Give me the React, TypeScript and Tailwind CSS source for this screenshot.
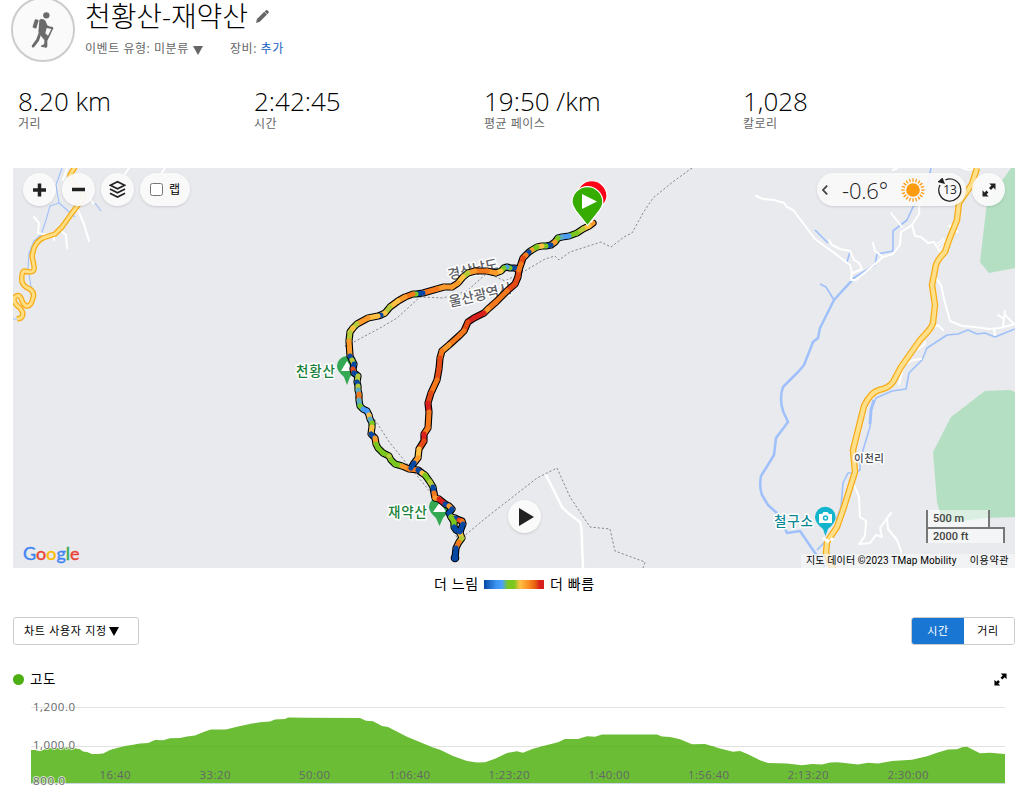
import React from 'react';

type Point = [number, number];
type TrackPoint = [number, number, string];

const NAVY = '#0549a4';
const BLUE = '#4a9df8';
const TEAL = '#5cabc8';
const GREEN = '#7ac71f';
const LIME = '#b5cb3a';
const YELLOW = '#ffc043';
const AMBER = '#fb9a2c';
const ORANGE = '#f4791d';
const RED = '#e44a15';
const CRIMSON = '#d8201f';

// each colour belongs to the piece that ends at the point
const commonTrack: TrackPoint[] = [
  [593, 223, AMBER], [589, 226, AMBER], [583, 229, YELLOW], [577, 233, LIME], [569, 236, GREEN], [562, 237, BLUE], [558, 238, TEAL],
  [555, 242, GREEN], [551, 245, AMBER], [546, 246, NAVY], [542, 246, GREEN], [537, 247, YELLOW], [532, 250, GREEN], [529, 252, AMBER],
  [526, 255, NAVY], [523, 258, ORANGE], [521, 264, RED], [519, 270, ORANGE],
];

const eastTrack: TrackPoint[] = [
  [519, 270, ORANGE], [518, 277, RED], [515, 284, RED], [507, 291, RED], [496, 302, ORANGE], [488, 309, ORANGE], [484, 313, AMBER],
  [474, 318, CRIMSON], [468, 322, CRIMSON], [464, 331, RED], [460, 335, ORANGE], [449, 345, ORANGE], [442, 351, AMBER],
  [440, 358, ORANGE], [439, 369, RED], [437, 380, RED], [431, 393, ORANGE], [428, 403, RED], [429, 412, CRIMSON],
  [428, 428, ORANGE], [424, 434, ORANGE], [424, 441, CRIMSON], [419, 449, RED], [418, 458, YELLOW], [414, 463, AMBER], [411, 468, NAVY],
];

const westTrack: TrackPoint[] = [
  [519, 270, ORANGE], [515, 268, RED], [510, 268, NAVY], [507, 267, GREEN], [504, 268, BLUE], [501, 271, GREEN], [496, 273, YELLOW],
  [487, 271, AMBER], [475, 271, ORANGE], [468, 273, AMBER], [463, 277, LIME], [458, 283, YELLOW], [452, 287, AMBER], [444, 287, AMBER],
  [437, 289, AMBER], [423, 293, ORANGE], [416, 294, NAVY], [413, 294, GREEN], [405, 297, ORANGE], [398, 301, AMBER], [390, 307, YELLOW],
  [385, 313, LIME], [381, 315, YELLOW], [378, 316, NAVY], [368, 318, YELLOW], [357, 324, AMBER], [353, 328, LIME], [350, 332, YELLOW],
  [349, 341, LIME], [350, 356, AMBER], [352, 360, NAVY], [354, 364, LIME], [353, 369, NAVY], [354, 373, RED], [358, 376, NAVY],
  [357, 382, LIME], [358, 386, NAVY], [358, 390, LIME], [359, 394, TEAL], [359, 400, ORANGE], [360, 406, TEAL], [363, 409, GREEN],
  [367, 411, BLUE], [369, 415, BLUE], [370, 419, YELLOW], [372, 423, TEAL], [372, 427, GREEN], [371, 434, YELLOW], [375, 438, NAVY],
  [376, 444, AMBER], [378, 448, GREEN], [383, 453, GREEN], [389, 456, GREEN], [391, 460, LIME], [395, 464, GREEN], [402, 466, GREEN],
  [409, 469, AMBER], [418, 470, ORANGE], [422, 473, NAVY], [425, 475, YELLOW], [430, 482, GREEN], [433, 487, LIME], [434, 493, NAVY],
  [435, 498, ORANGE], [439, 499, AMBER], [445, 504, CRIMSON], [449, 506, NAVY], [452, 509, AMBER], [449, 513, NAVY], [451, 517, NAVY],
  [455, 518, YELLOW], [459, 520, NAVY], [462, 521, RED], [463, 524, ORANGE], [461, 529, NAVY], [460, 533, NAVY], [462, 538, YELLOW],
  [459, 542, LIME], [456, 548, ORANGE], [455, 558, NAVY],
];

const summitLoop: TrackPoint[] = [
  [451, 517, NAVY], [454, 522, GREEN], [454, 527, GREEN], [456, 530, NAVY], [460, 532, NAVY],
];

const elevation: Point[] = [
  [31, 750], [35, 750], [39, 751], [43, 750], [47, 748], [58, 748], [68, 747], [76, 748.5], [80, 749.3], [83, 751.5], [87, 752], [92, 754], [98, 754],
  [103, 753.5], [110, 750], [117, 748], [125, 746], [133, 744.7], [140, 743.5], [148, 743], [155, 740], [163, 740.3], [170, 738.3],
  [180, 738], [187, 736.5], [195, 735.5], [201, 733], [207, 730.7], [211, 729.6], [226, 729.6], [237, 726.7], [252, 723.5], [260, 722.3], [270, 721.5],
  [275, 719.5], [285, 719], [288, 717.5], [310, 717.7], [360, 718], [366, 720.7], [373, 721.2], [382, 726], [388, 727], [407, 736.7],
  [433, 747.5], [440, 749.7], [453, 756], [467, 761], [477, 762.5], [485, 762.2], [495, 758.7], [507, 753], [517, 751.3], [523, 752.7],
  [533, 748.7], [547, 745], [558, 742.3], [565, 739], [578, 739], [587, 736.3], [595, 736.7], [602, 734.5], [657, 734.6], [662, 736.6],
  [670, 737], [680, 739.3], [692, 744.3], [705, 744], [720, 748.6], [733, 751.7], [740, 751], [748, 754.3], [760, 760.3], [768, 763],
  [787, 763.6], [802, 765.3], [812, 764], [822, 764.6], [830, 762.6], [838, 762.3], [858, 764.6], [868, 762.8], [878, 763.6], [892, 761],
  [912, 759.7], [927, 756.3], [937, 752.7], [948, 749.5], [957, 749.3], [962, 747.3], [967, 746.7], [980, 753.3], [990, 752.7], [1005, 754],
];

const stats = [
  { value: '8.20 km', label: '거리', width: 'w-[236px]' },
  { value: '2:42:45', label: '시간', width: 'w-[230px]' },
  { value: '19:50 /km', label: '평균 페이스', width: 'w-[259px]' },
  { value: '1,028', label: '칼로리', width: 'w-[200px]' },
];

const timeLabels = [
  { x: 115, text: '16:40' },
  { x: 215, text: '33:20' },
  { x: 314.5, text: '50:00' },
  { x: 409.5, text: '1:06:40' },
  { x: 509, text: '1:23:20' },
  { x: 609, text: '1:40:00' },
  { x: 708.5, text: '1:56:40' },
  { x: 808, text: '2:13:20' },
  { x: 908, text: '2:30:00' },
];

const toPoints = (pts: (Point | TrackPoint)[]) => pts.map((p) => `${p[0]},${p[1]}`).join(' ');

function Track({ points }: { points: TrackPoint[] }) {
  return (
    <g fill="none" strokeLinecap="round" strokeLinejoin="round" strokeWidth={5}>
      {points.slice(1).map((p, i) => (
        <line key={i} x1={points[i][0]} y1={points[i][1]} x2={p[0]} y2={p[1]} stroke={p[2]} />
      ))}
    </g>
  );
}

function HikerIcon() {
  return (
    <svg className="h-[37px] w-[24px]" viewBox="95 29 72 111" fill="#6b6b6b">
      <circle cx="141" cy="42" r="9.5" />
      <rect x="-6" y="-13" width="12" height="27" rx="3" transform="translate(109 67) rotate(17)" />
      <path d="M120 56q3-4 9-3 8 1 10 7l5 12 9 4q6-1 9 4 1 3-3 6l-5 12-10 20 0 17q0 4-4 4-4 1-5-3l0-20-12-14q-8-8-5-19z" />
      <path d="M118 94l6 9-5 15-15 20q-4 2-6-1-2-2 0-5l13-18z" />
      <path d="M126 137q-3-4 2-5l7-4 3-8 4 14q1 4-4 4z" />
      <path d="M142 80l-4 16 8 7 10-20z" fill="#fafafa" />
    </svg>
  );
}

function ExpandIcon({ className }: { className: string }) {
  return (
    <svg className={className} viewBox="0 0 14 14" fill="currentColor">
      <path d="M7.3 0.5H13.5V6.7L11.4 4.6L9 7L7 5L9.4 2.6ZM6.7 13.5H0.5V7.3L2.6 9.4L4.4 7.6L6.4 9.6L4.6 11.4Z" />
    </svg>
  );
}

function SunIcon() {
  return (
    <svg className="h-6 w-6" viewBox="-12 -12 24 24">
      <circle r="6.8" fill="#ff9b0f" />
      {Array.from({ length: 20 }, (_, i) => (
        <line key={i} x1="0" y1="-8.300" x2="0" y2="-11.700" stroke="#ff9b0f" strokeWidth="1.300" transform={`rotate(${i * 18})`} />
      ))}
    </svg>
  );
}

function RouteMap() {
  const rightRoad = 'M977 168L972 184L959 203L957 220L949 240L945 252Q935 262 935 270L932 285L935 305L933 323Q932 328 920 340L901 367L893 382Q889 388 879 390Q871 392 864 406L858 430L853 450L855 472L843 510L837 527L827 542L826 553L833 569';
  const leftRoad = 'M75 167L70 175Q70 181 76 186Q86 192 82 200L72 213L62 227L55 234L43 238Q37 241 34 248L32 256L34 266Q35 272 30 272L24 271Q21 273 22 282Q24 287 30 289Q35 293 33 298Q31 307 26 306Q22 303 21 298Q18 293 14 298Q13 303 20 308Q25 314 21 318L17 319';
  return (
    <svg className="block h-[400px] w-[1002px]" viewBox="13 168 1002 400">
      <rect x="13" y="168" width="1002" height="400" fill="#e8eaed" />
      <g fill="#b4dfc2">
        <path d="M1011 168L987 202L980 262L989 273L1015 268V168Z" />
        <path d="M1015 392L1010 390L985 391L951 417L933 452L937 502L943 523L987 518L1015 517Z" />
      </g>

      {/* rivers */}
      <g fill="none" stroke="#9fc0fa" strokeWidth="1.600" strokeLinejoin="round">
        <path d="M931 168L926 190L913 207L907 220L893 231L893 251L877 254L875 265L855 277" />
        <path d="M855 277L834 300L820 328L818 338L813 342L804 365L799 371L783 387Q779 398 783 411L788 422L776 438L774 455L761 476Q759 487 762 495L768 505L778 514L787 533L800 531L813 550L825 567" strokeWidth="2.500" />
        <path d="M820 284L826 287L834 300M815 230L828 243M850 252L847 262M825 542L817 550" />
        <path d="M1015 329L995 337L985 333L977 334L968 330L958 334L947 335L927 348L922 360L909 373L906 389L892 391L876 398L871 410L870 427L860 460L860 470L855 473L848 473L843 483L841 507L836 520" />
        <path d="M62 168L56 185L59 203L50 206L46 220L41 235M59 203L75 217M95 203L101 211M41 235L34 241L29 253L28 268L31 287M13 319H20" strokeWidth="1.100" />
      </g>
      <path d="M874 400L871 410L870 424" stroke="#9fc0fa" strokeWidth="3" fill="none" />

      {/* minor roads */}
      <g fill="none" stroke="#fff" strokeWidth="2" strokeLinejoin="round" strokeLinecap="round">
        <path d="M756 196L763 199L774 200L784 203L787 207L793 210L803 223L815 239L833 252L850 265L852 273L851 280L856 280L868 270L883 257L893 254L900 245L901 232L912 225L919 214L920 195L913 182" />
        <path d="M912 225L915 236L921 237L928 243L934 242L940 252" />
        <path d="M829 240L832 245L840 249L850 251L854 260L859 263L862 269L853 273M873 243L875 251L883 257" />
        <path d="M936 278L941 285L944 299L950 321L962 326L975 327L989 329L1000 328L1015 324M1005 311L1003 326M998 315L1004 319M1005 315L1014 324M994 329L995 335" />
        <path d="M933 328L938 325L943 330M918 349L924 345L925 342M904 365L913 360L921 359M903 368L899 384M891 213L902 227M949 226L958 232M957 221L950 226" />
        <path d="M853 482L859 497L860 517L866 521L865 536L859 544L870 543L876 535L882 537L880 528L891 513L887 518L888 529L897 540L901 551V559" />
        <path d="M546 475L562 507Q567 513 580 522Q582 526 582 543L583 568" strokeWidth="2.500" />
        <path d="M34 217L39 223L38 233L47 235L54 235V240M62 224L59 229L66 235L67 248M78 210L84 224L89 241M63 180L67 168M125 174L129 168M161 174L165 168M88 196L93 203" />
        <path d="M893 170L897 168M962 168L969 170L975 168" />
        <path d="M937 244L944 238M938 247L945 240M940 250L946 243" strokeWidth="1.100" />
      </g>

      <g fill="none" strokeLinejoin="round">
        <path d={rightRoad} stroke="#f7ab16" strokeWidth="6.500" />
        <path d={rightRoad} stroke="#ffe08a" strokeWidth="4" />
        <path d={leftRoad} stroke="#f7ab16" strokeWidth="5.500" />
        <path d={leftRoad} stroke="#ffdf86" strokeWidth="3" />
      </g>

      {/* borders */}
      <g fill="none" stroke="#85888d" strokeWidth="1" strokeDasharray="2.200 2">
        <path d="M692 168L674 181L653 198L643 213L632 233L624 237L611 247L601 242L570 252L559 260L555 256L545 259L523 272L505 281L487 273L467 291L443 298L420 297L397 318L380 328L352 343L345 344L348 355M355 397L375 420L390 443L408 465L423 483L447 513L457 538L463 537L487 517L537 478L557 468L570 497L590 527L610 529L615 551L645 562L643 568" />
      </g>

      <g fontFamily='"Noto Sans CJK KR", sans-serif' fontWeight="500" paintOrder="stroke" stroke="#fff" strokeWidth="3" strokeLinejoin="round">
        <text x="449" y="280" fontSize="14" fill="#5f6368" transform="rotate(-13 449 280)" textLength="51">경상남도</text>
        <text x="450" y="307" fontSize="14" fill="#5f6368" transform="rotate(-13 450 307)" textLength="64">울산광역시</text>
        <text x="296" y="375.500" fontSize="13.500" fill="#188038" textLength="39">천황산</text>
        <text x="388" y="516.500" fontSize="13.500" fill="#188038" textLength="39">재약산</text>
        <text x="774" y="526" fontSize="13.500" fill="#0b8794" textLength="39">철구소</text>
        <text x="854" y="462" fontSize="10.500" fill="#45484c" textLength="30">이천리</text>
      </g>

      <path d="M347 385L344 377Q337 371 337 366A10 10 0 0 1 357 366Q357 371 350 377Z" fill="#34a853" />
      <path d="M341 371L347 361L353 371Z" fill="#fff" />
      <path d="M439.500 526L436 518Q429 512 429 507A10 10 0 0 1 449 507Q449 512 443 518Z" fill="#34a853" />
      <path d="M433 512L440 502L446 512Z" fill="#fff" />
      <path d="M825.500 536L823 529Q815 523 815 517A10.300 10.300 0 0 1 835.600 517Q835.600 523 828 529Z" fill="#12b5cb" />
      <path d="M819 514h3l1.500-2h4l1.500 2h3v9h-13z" fill="#fff" />
      <circle cx="825.500" cy="518" r="2" fill="#fff" stroke="#12b5cb" strokeWidth="1.500" />
      <path d="M823 538l6 4M831 541l2-3" stroke="#fff" strokeWidth="3" />

      <g fill="none" stroke="#000" strokeWidth="7.200" strokeLinejoin="round" strokeLinecap="round">
        <polyline points={toPoints(commonTrack)} />
        <polyline points={toPoints(eastTrack)} />
        <polyline points={toPoints(westTrack)} />
        <polyline points={toPoints(summitLoop)} />
      </g>
      <circle cx="455" cy="558" r="4.300" fill="#000" />
      <Track points={westTrack} />
      <Track points={eastTrack} />
      <Track points={summitLoop} />
      <Track points={commonTrack} />
      <circle cx="455" cy="558" r="3.300" fill={NAVY} />

      {/* finish and start pins */}
      <path d="M591.500 222L581 206Q576 200 576.500 196A15.200 15.200 0 0 1 607 196Q607 201 602 206Z" fill="#ff0018" stroke="#fff" strokeWidth="1.200" />
      <path d="M587.500 225.500L576 211Q572 205 572 202A15.400 15.400 0 0 1 602.800 202Q603 206 599 211Z" fill="#36ab00" stroke="#fff" strokeWidth="1.200" />
      <path d="M582 194L597 201.500L582 209Z" fill="#fff" />
    </svg>
  );
}

const roundButton = 'flex h-[33px] w-[33px] items-center justify-center rounded-full bg-[#fafafa]/95 text-[#222] shadow-sm';

function MapPanel() {
  return (
    <div className="relative ml-[13px] mt-[35px] h-[400px] w-[1002px] overflow-hidden">
      <RouteMap />

      <div className="absolute left-[10px] top-[5px] flex gap-[6px]">
        <button className={roundButton}>
          <svg className="h-[14px] w-[13px]" viewBox="0 0 13 14" stroke="#222" strokeWidth="3.500">
            <path d="M6.500 .5v13M0 7h13" />
          </svg>
        </button>
        <button className={roundButton}>
          <svg className="h-[14px] w-[13px]" viewBox="0 0 13 14" stroke="#222" strokeWidth="3.500">
            <path d="M0 6.500h13" />
          </svg>
        </button>
        <button className={roundButton}>
          <svg className="h-[19px] w-[17px]" viewBox="0 0 18 19" fill="none" stroke="#222" strokeWidth="1.700">
            <path d="M1.500 5L9 1.300L16.500 5L9 8.700ZM1 9L9 13L17 9M1 13.500L9 17.500L17 13.500" />
          </svg>
        </button>
        <label className="flex h-[33px] w-[50px] items-center rounded-full bg-[#fafafa]/95 pl-[10px] shadow-sm">
          <span className="h-[13px] w-[13px] rounded-[2.500px] border border-[#767676] bg-white" />
          <span className="ml-[6px] text-[12px] leading-none text-black">랩</span>
        </label>
      </div>

      <div className="absolute right-[10px] top-[5px] flex gap-[6px]">
        <div className="flex h-[33px] w-[149px] items-center rounded-full bg-[#fafafa]/90 pl-[5px] shadow-sm">
          <svg className="h-[10px] w-[6px]" viewBox="0 0 6 10" fill="none" stroke="#444" strokeWidth="1.800">
            <path d="M5.200 .6L1 5L5.200 9.400" />
          </svg>
          <span className="ml-[14px] w-[48px] whitespace-nowrap text-[22px] font-light leading-none tracking-[-0.200px] text-[#222]">-0.6°</span>
          <div className="ml-[11px]">
            <SunIcon />
          </div>
          <div className="relative ml-[13px] flex h-[24px] w-[24px] items-center justify-center">
            <svg className="absolute inset-0 h-full w-full" viewBox="0 0 24 24" fill="none">
              <path d="M7.500 1.900A11 11 0 1 1 2 7" stroke="#222" strokeWidth="1.300" />
              <path d="M-0.500 4L4.500 -0.500L7 6Z" fill="#222" />
            </svg>
            <span className="text-[12px] leading-none text-[#222]">13</span>
          </div>
        </div>
        <button className={roundButton}>
          <ExpandIcon className="h-[14px] w-[14px]" />
        </button>
      </div>

      <button className="absolute left-[495px] top-[332px] flex h-[33px] w-[33px] items-center justify-center rounded-full bg-[#fafafa] shadow-sm">
        <svg className="ml-[3px] h-[18px] w-[15px]" viewBox="0 0 15 18">
          <path d="M0 0L15 9L0 18Z" fill="#222" />
        </svg>
      </button>

      <div className="absolute bottom-[4px] left-[10px] font-['Lato'] text-[18px] leading-[22px] [-webkit-text-stroke:0.400px]">
        <span className="text-[#4285f4]">G</span>
        <span className="text-[#ea4335]">o</span>
        <span className="text-[#fbbc05]">o</span>
        <span className="text-[#4285f4]">g</span>
        <span className="text-[#34a853]">l</span>
        <span className="text-[#ea4335]">e</span>
      </div>

      <div className="absolute left-[913px] top-[342px] flex flex-col items-start font-['Roboto'] text-[11px] font-medium text-[#444]">
        <div className="h-[17px] w-[64px] border-x-2 border-[#777] bg-white/50 pl-[5px] leading-[17px]">500 m</div>
        <div className="h-[16px] w-[79px] border-x-2 border-t-2 border-[#777] bg-white/50 pl-[5px] leading-[15px]">2000 ft</div>
      </div>

      <div className="absolute bottom-0 right-0 flex h-[14px] w-[214px] justify-between whitespace-nowrap bg-[#f5f5f5]/75 pl-[5px] pr-[6px] font-['Roboto','Noto_Sans_CJK_KR',sans-serif] text-[10px] leading-[14px] text-black">
        <span className="tracking-[0.120px]">지도 데이터 ©2023 TMap Mobility</span>
        <span className="tracking-[0.600px]">이용약관</span>
      </div>
    </div>
  );
}

function ElevationChart() {
  return (
    <svg className="block h-[96px] w-[1016px]" viewBox="0 700 1016 96" fontFamily='"Open Sans", sans-serif' fontSize="11.500">
      <path d="M31 707.500H1005M31 746.500H1005" stroke="#e2e2e2" />
      <polygon points={`31,783 ${toPoints(elevation)} 1005,783`} fill="#6abd35" />
      <path d="M133 746.500H430M541 746.500H714" stroke="#5fae30" strokeOpacity=".5" />
      <path d="M31 783.500H1005" stroke="#ccd6eb" />
      <g fill="#666" textAnchor="middle">
        {timeLabels.map((t) => (
          <text key={t.text} x={t.x} y="779" textLength={t.text.length > 5 ? 41 : 31}>{t.text}</text>
        ))}
      </g>
      <g fill="#666" stroke="#fff" strokeWidth="2" strokeOpacity=".7" paintOrder="stroke">
        <text x="33" y="710.500" textLength="42">1,200.0</text>
        <text x="33" y="748.500" textLength="42">1,000.0</text>
        <text x="33" y="785" textLength="32">800.0</text>
      </g>
    </svg>
  );
}

export default function App() {
  return (
    <div className="h-[796px] w-[1016px] overflow-hidden bg-white font-['Open_Sans','Noto_Sans_CJK_KR',sans-serif] text-black">
      <header className="flex h-[62px] pl-[11px]">
        <div className="-mt-[3px] flex h-[65px] w-[64px] shrink-0 items-center justify-center rounded-full border-2 border-[#ccc] bg-[#fafafa]">
          <HikerIcon />
        </div>
        <div className="ml-[10px]">
          <div className="flex h-[33px] items-center">
            <h1 className="w-[164px] whitespace-nowrap text-[28px] font-light leading-[33px] tracking-[-0.100px]">천황산-재약산</h1>
            <svg className="ml-[7px] h-[13px] w-[13px]" viewBox="0 0 13 13" fill="#666">
              <path d="M0 13L1 9L8.200 1.800L11 4.600L3.800 11.800ZM8.600 1.400L10 .2Q10.700-.3 11.300 .3L12.600 1.600Q13.200 2.200 12.600 2.800L11.400 4.200Z" />
            </svg>
          </div>
          <div className="mt-[8px] flex h-4 items-center whitespace-nowrap text-[12px] leading-4 text-[#666]">
            <span className="w-[108px] tracking-[0.550px]">이벤트 유형: 미분류</span>
            <svg className="mt-[2px] h-[9px] w-[10px]" viewBox="0 0 10 9" fill="#666">
              <path d="M0 0H10L5 9Z" />
            </svg>
            <span className="ml-[27px] tracking-[0.550px]">
              장비: <a className="text-[#1160c4]">추가</a>
            </span>
          </div>
        </div>
      </header>

      <section className="mt-[22px] flex h-[49px] pl-[18px]">
        {stats.map((s) => (
          <div key={s.label} className={s.width}>
            <div className="h-[32px] text-[26px] font-light leading-[35px]">{s.value}</div>
            <div className="pt-[1px] text-[12px] leading-[14px] tracking-[0.500px] text-[#666]">{s.label}</div>
          </div>
        ))}
      </section>

      <MapPanel />

      <div className="ml-[434px] flex h-[32px] items-center text-[14px] leading-none tracking-[0.600px]">
        <span className="w-[50px] whitespace-nowrap">더 느림</span>
        <div className="mt-[1px] h-[9px] w-[60px] bg-[linear-gradient(90deg,#0549a4_0%,#3b92f0_20%,#4aa0ff_30%,#7ac71f_40%,#7ac71f_50%,#ffc043_60%,#f98a22_75%,#e8600f_85%,#d8201f_93%)]" />
        <span className="ml-[6px] whitespace-nowrap">더 빠름</span>
      </div>

      <div className="ml-[13px] mt-[17px] flex h-[28px] w-[1002px] justify-between text-[11px]">
        <button className="flex w-[126px] items-center rounded-[3px] border border-[#ccc] pl-[10px]">
          <span className="w-[85px] whitespace-nowrap text-left tracking-[0.700px]">차트 사용자 지정</span>
          <svg className="h-[9px] w-[10px]" viewBox="0 0 10 9">
            <path d="M0 0H10L5 9Z" />
          </svg>
        </button>
        <div className="flex w-[104px] overflow-hidden rounded-[3px] border border-[#ccc] tracking-[0.600px]">
          <button className="w-[52px] bg-[#1976d2] text-white">시간</button>
          <button className="flex-1 bg-white pr-[2px]">거리</button>
        </div>
      </div>

      <div className="mt-[25px] flex h-[18px] items-center pl-[13px] pr-[9px]">
        <span className="h-[11px] w-[11px] rounded-full bg-[#4caf12]" />
        <span className="ml-[6px] mt-[1px] text-[13.500px] leading-none tracking-[0.600px]">고도</span>
        <ExpandIcon className="ml-auto mt-[1px] h-[13px] w-[13px]" />
      </div>

      <div className="mt-[12px]">
        <ElevationChart />
      </div>
    </div>
  );
}
